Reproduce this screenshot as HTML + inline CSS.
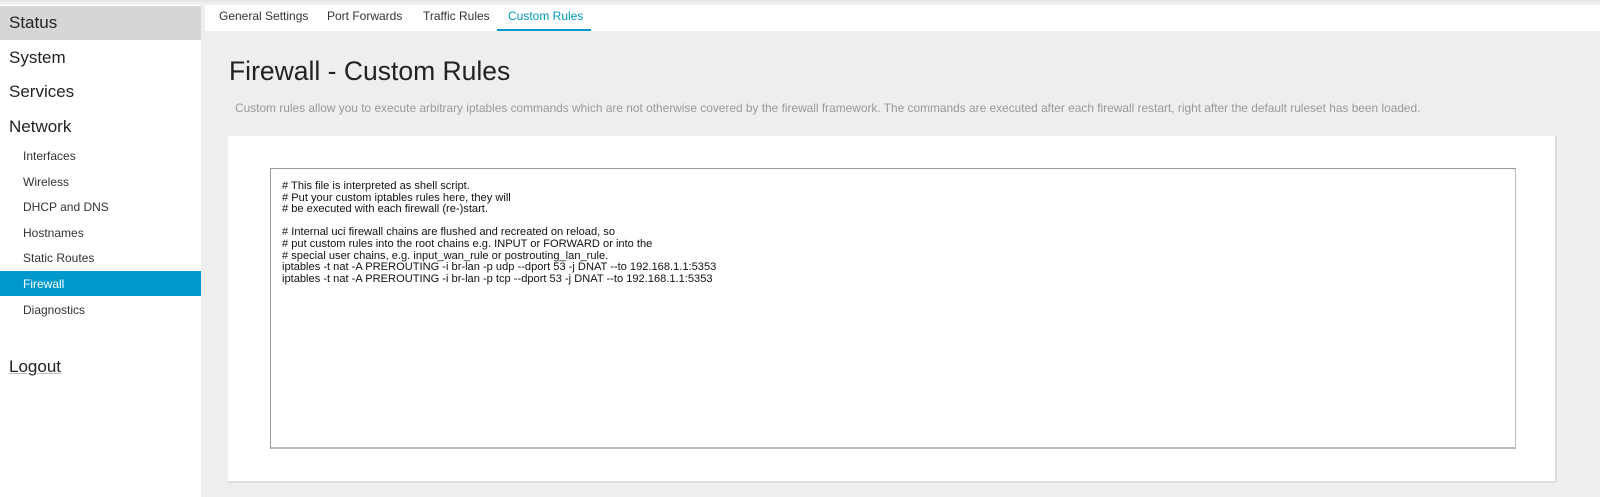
<!DOCTYPE html>
<html><head><meta charset="utf-8"><style>
*{margin:0;padding:0;box-sizing:border-box}
body{width:1600px;height:497px;overflow:hidden;background:#eeeeee;font-family:"Liberation Sans",sans-serif;position:relative}
.top{position:absolute;left:0;top:0;width:1600px;height:5px;background:linear-gradient(#e4e4e4,#f6f6f6)}
.side{position:absolute;left:0;top:5px;width:201px;height:492px;background:#fff}
.side .m{position:absolute;left:9px;font-size:17px;color:#222}
.side .s{position:absolute;left:23px;font-size:12px;color:#333}
.status{position:absolute;left:0;top:1px;width:201px;height:34px;background:#d6d6d6}
.fw{position:absolute;left:0;top:266px;width:201px;height:25px;background:#0099cc}
.tabs{position:absolute;left:205px;top:5px;width:1395px;height:26px;background:#fff}
.tabs span{position:absolute;top:4px;font-size:12px;color:#333}
.ul{position:absolute;left:292px;top:24px;width:94px;height:2px;background:#0099cc}
h1{position:absolute;left:229px;top:56px;font-weight:normal;font-size:26.5px;color:#222}
.desc{position:absolute;left:235px;top:101px;font-size:11.9px;color:#999}
.card{position:absolute;left:228px;top:136px;width:1329px;height:347px;background:#fff;border-right:2px solid #ddd;border-bottom:2px solid #ddd}
.ta{position:absolute;left:270px;top:168px;width:1246px;height:281px;border:1px solid #999;border-right-color:#bbb;border-bottom:2px solid #bbb;background:#fff;padding:12px 0 0 11px;font-size:11.1px;line-height:11.6px;color:#111;white-space:pre}
</style></head><body>
<div class="top"></div>
<div class="side">
<div class="status"></div>
<div class="m" style="top:8px">Status</div>
<div class="m" style="top:43px">System</div>
<div class="m" style="top:77px">Services</div>
<div class="m" style="top:112px">Network</div>
<div class="s" style="top:144px">Interfaces</div>
<div class="s" style="top:170px">Wireless</div>
<div class="s" style="top:195px">DHCP and DNS</div>
<div class="s" style="top:221px">Hostnames</div>
<div class="s" style="top:246px">Static Routes</div>
<div class="fw"></div>
<div class="s" style="top:272px;color:#fff">Firewall</div>
<div class="s" style="top:298px">Diagnostics</div>
<div class="m" style="top:352px;text-decoration:underline;text-decoration-color:#bbb">Logout</div>
</div>
<div class="tabs">
<span style="left:14px">General Settings</span>
<span style="left:122px">Port Forwards</span>
<span style="left:218px">Traffic Rules</span>
<span style="left:303px;color:#0099cc">Custom Rules</span>
<div class="ul"></div>
</div>
<h1>Firewall - Custom Rules</h1>
<div class="desc">Custom rules allow you to execute arbitrary iptables commands which are not otherwise covered by the firewall framework. The commands are executed after each firewall restart, right after the default ruleset has been loaded.</div>
<div class="card"></div>
<div class="ta"># This file is interpreted as shell script.
# Put your custom iptables rules here, they will
# be executed with each firewall (re-)start.

# Internal uci firewall chains are flushed and recreated on reload, so
# put custom rules into the root chains e.g. INPUT or FORWARD or into the
# special user chains, e.g. input_wan_rule or postrouting_lan_rule.
iptables -t nat -A PREROUTING -i br-lan -p udp --dport 53 -j DNAT --to 192.168.1.1:5353
iptables -t nat -A PREROUTING -i br-lan -p tcp --dport 53 -j DNAT --to 192.168.1.1:5353</div>
</body></html>
